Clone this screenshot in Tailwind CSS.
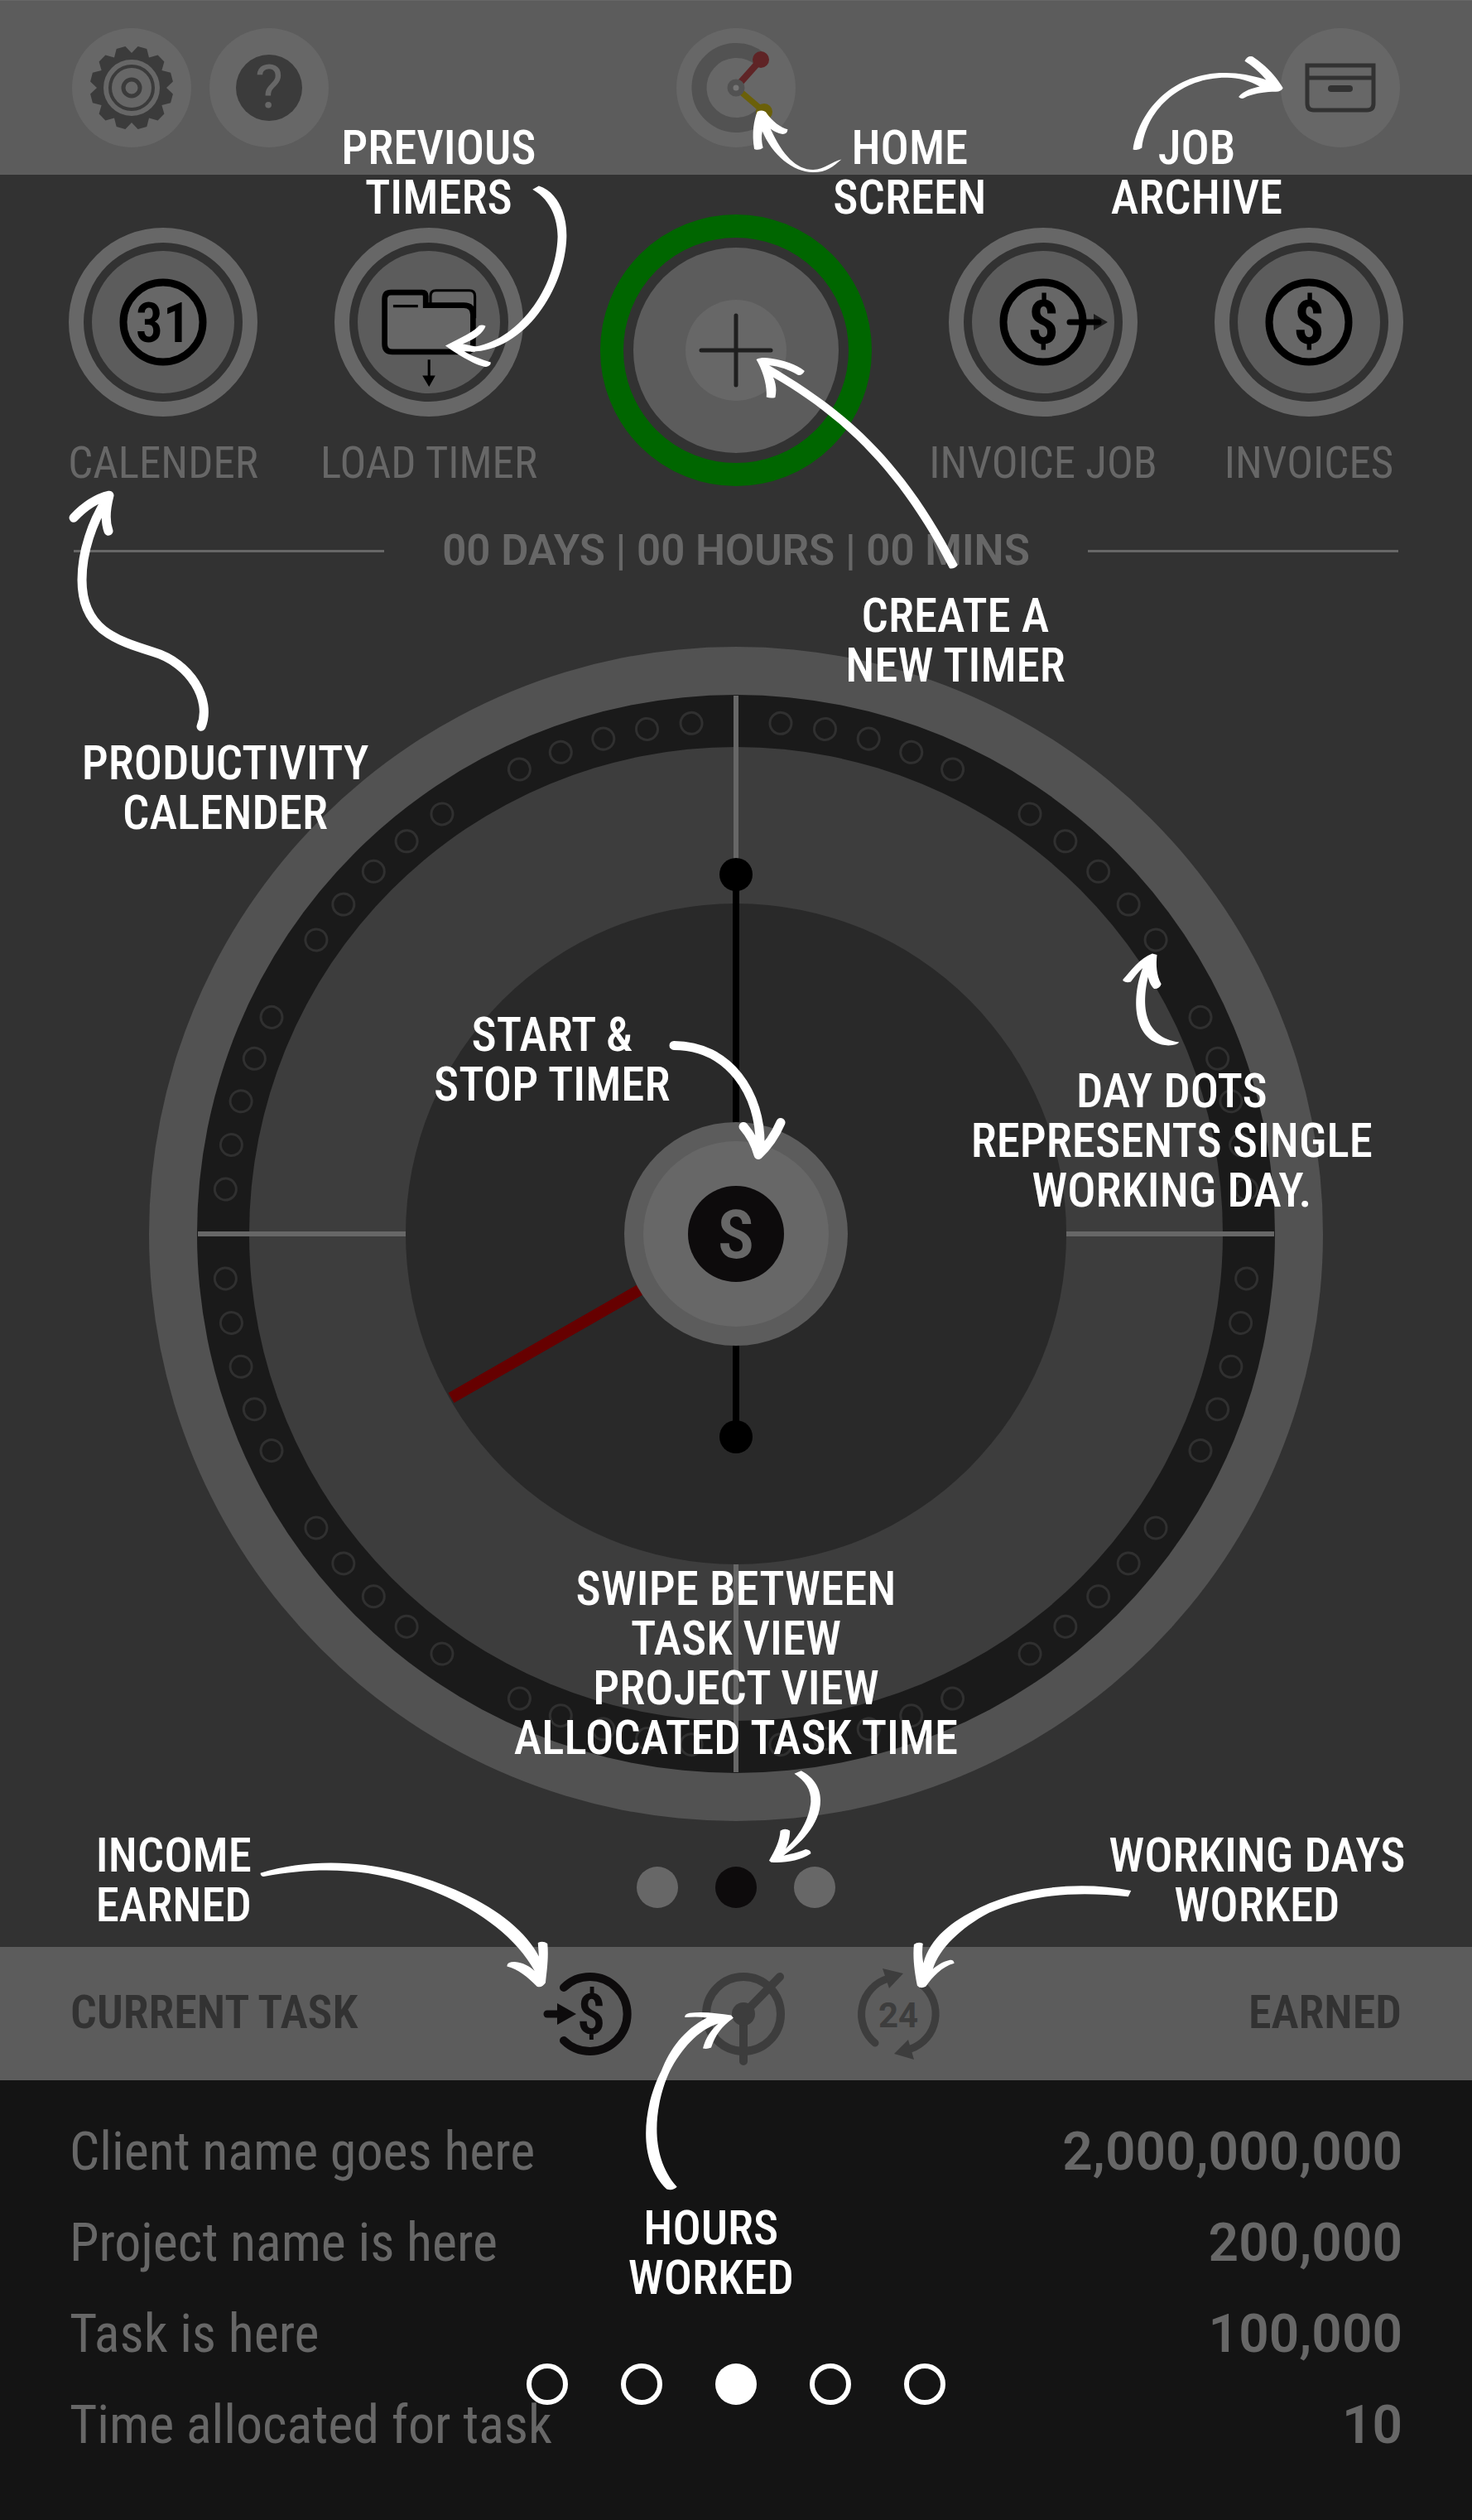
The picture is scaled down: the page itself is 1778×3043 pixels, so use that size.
<!DOCTYPE html>
<html lang="en">
<head>
<meta charset="utf-8">
<meta name="viewport" content="width=device-width, initial-scale=1">
<title>Job timer – guide</title>
<script src="https://cdn.jsdelivr.net/npm/@tailwindcss/browser@4"></script>
</head>
<body class="bg-[#141414] font-['Roboto_Condensed','Roboto',sans-serif]">
<div class="relative overflow-hidden bg-[#323232]">

  <!-- Top bar -->
  <header class="grid h-[211px] grid-cols-3 items-center border-t border-[#676767] bg-[#5c5c5c] px-[87px]">
    <div class="flex gap-[22px]">
      <button aria-label="Settings" class="size-36 rounded-full bg-[#676767]">
        <svg viewBox="-72 -72 144 144" class="size-full" fill="#3b3b3b">
          <defs><path id="teeth" d="M0 0V-42L7.600-49.900L18.300-47.100L21-36.400L31.600-39.400L39.400-31.600L36.400-21L47.100-18.300L49.900-7.600L42 0Z"/></defs>
          <circle r="41"/>
          <use href="#teeth"/><use href="#teeth" transform="rotate(90)"/><use href="#teeth" transform="rotate(180)"/><use href="#teeth" transform="rotate(270)"/>
          <circle r="31" fill="none" stroke="#676767" stroke-width="6"/>
          <circle r="24" fill="#676767"/>
          <circle r="10" fill="#676767" stroke="#3b3b3b" stroke-width="5"/>
        </svg>
      </button>
      <button aria-label="Help" class="flex size-36 items-center justify-center rounded-full bg-[#676767]">
        <span class="flex size-20 items-center justify-center rounded-full bg-[#3b3b3b] font-['Roboto',sans-serif] text-[72px] leading-none text-[#676767]">?</span>
      </button>
    </div>
    <button aria-label="Home" class="size-36 justify-self-center rounded-full bg-[#676767]">
      <svg viewBox="-72 -72 144 144" class="size-full">
        <path d="M30-34A45 45 0 1 0 34 30" fill="none" stroke="#525252" stroke-width="18"/>
        <path d="M5-6L30-34" stroke="#5f2426" stroke-width="8"/><circle cx="30" cy="-34" r="10" fill="#5f2426"/>
        <path d="M6 5L34 29" stroke="#6b6009" stroke-width="7"/><circle cx="34" cy="29" r="10" fill="#6b6009"/>
        <circle r="7" fill="#767676" stroke="#525252" stroke-width="7"/>
      </svg>
    </button>
    <button aria-label="Job archive" class="size-36 justify-self-end rounded-full bg-[#676767]">
      <svg viewBox="-72 -72 144 144" class="size-full" fill="none" stroke="#323232" stroke-width="5">
        <path d="M-40-27H40V19Q40 27 32 27H-32Q-40 27-40 19ZM-40-12H40"/>
        <path d="M-11 1H11" stroke-width="8" stroke-linecap="round"/>
      </svg>
    </button>
  </header>

  <!-- Main actions -->
  <nav class="flex items-start justify-between px-[83px] pt-12 text-[53px] leading-[60px] text-[#676767]">
    <button class="mt-4 flex w-[228px] flex-col items-center gap-[26px]">
      <span class="flex size-[228px] items-center justify-center rounded-full border-[18px] border-[#676767]">
        <svg viewBox="-86 -86 172 172" class="size-[172px] rounded-full bg-[#5c5c5c]">
          <circle r="48" fill="#676767" stroke="#000" stroke-width="9"/>
          <text y="24" text-anchor="middle" font-size="66" font-weight="600" fill="#000">31</text>
        </svg>
      </span>
      <span class="whitespace-nowrap">CALENDER</span>
    </button>
    <button class="mt-4 flex w-[228px] flex-col items-center gap-[26px]">
      <span class="flex size-[228px] items-center justify-center rounded-full border-[18px] border-[#676767]">
        <svg viewBox="968 678 385 385" class="size-[172px] rounded-full bg-[#5c5c5c]" stroke="#000">
          <path d="M1165 830V800Q1165 785 1180 785H1270Q1285 785 1285 800V860" fill="#676767" stroke-width="7"/>
          <path d="M1041 808Q1041 790 1058 790H1142Q1152 790 1152 800V825H1255Q1280 825 1280 850V930Q1280 951 1258 951H1062Q1041 951 1041 930Z" fill="#676767" stroke-width="15"/>
          <path d="M1064 827H1131M1161 972V1020" stroke-width="7"/>
          <path d="M1143 1015H1178L1161 1045Z" stroke="none"/>
        </svg>
      </span>
      <span class="whitespace-nowrap">LOAD TIMER</span>
    </button>
    <button aria-label="New timer" class="flex size-[328px] items-center justify-center rounded-full border-[28px] border-[#006600]">
      <svg viewBox="-124 -124 248 248" class="size-[248px] rounded-full bg-[#5c5c5c]">
        <circle r="61" fill="#676767"/>
        <path d="M-42 0H42M0-42V42" stroke="#1f1f1f" stroke-width="5" stroke-linecap="round"/>
      </svg>
    </button>
    <button class="mt-4 flex w-[228px] flex-col items-center gap-[26px]">
      <span class="flex size-[228px] items-center justify-center rounded-full border-[18px] border-[#676767]">
        <svg viewBox="-86 -86 172 172" class="size-[172px] rounded-full bg-[#5c5c5c]">
          <circle r="48" fill="#676767" stroke="#000" stroke-width="9"/>
          <text y="26" text-anchor="middle" font-size="74" font-weight="700" fill="#000">$</text>
          <path d="M61-10L78 0L61 10Z" fill="#1d1d1d"/>
          <path d="M32 0H67" stroke="#000" stroke-width="7" stroke-linecap="round"/>
        </svg>
      </span>
      <span class="whitespace-nowrap">INVOICE JOB</span>
    </button>
    <button class="mt-4 flex w-[228px] flex-col items-center gap-[26px]">
      <span class="flex size-[228px] items-center justify-center rounded-full border-[18px] border-[#676767]">
        <svg viewBox="-86 -86 172 172" class="size-[172px] rounded-full bg-[#5c5c5c]">
          <circle r="48" fill="#676767" stroke="#000" stroke-width="9"/>
          <text y="26" text-anchor="middle" font-size="74" font-weight="700" fill="#000">$</text>
        </svg>
      </span>
      <span class="whitespace-nowrap">INVOICES</span>
    </button>
  </nav>

  <div class="mt-[46px] flex items-center gap-[70px] px-[89px] text-[#676767]">
    <span class="h-[3px] flex-1 bg-[#676767]"></span>
    <p class="font-['Roboto',sans-serif] text-[51px] leading-[60px] font-semibold">00 DAYS | 00 HOURS | 00 MINS</p>
    <span class="h-[3px] flex-1 bg-[#676767]"></span>
  </div>

  <!-- Dial -->
  <main class="pt-[86px]">
    <svg viewBox="-709 -709 1418 1418" role="img" aria-label="Timer dial" class="mx-auto w-full max-w-[1418px]">
      <defs>
        <g id="days" fill="none" stroke="#303030" stroke-width="3">
          <circle cy="-619" r="13" transform="rotate(5)"/><circle cy="-619" r="13" transform="rotate(10)"/><circle cy="-619" r="13" transform="rotate(15)"/><circle cy="-619" r="13" transform="rotate(20)"/><circle cy="-619" r="13" transform="rotate(25)"/>
        </g>
      </defs>
      <circle r="709" fill="#525252"/>
      <circle r="651" fill="#1a1a1a"/>
      <circle r="588" fill="#3d3d3d"/>
      <use href="#days"/><use href="#days" transform="rotate(30)"/><use href="#days" transform="rotate(60)"/><use href="#days" transform="rotate(90)"/><use href="#days" transform="rotate(120)"/><use href="#days" transform="rotate(150)"/><use href="#days" transform="rotate(180)"/><use href="#days" transform="rotate(210)"/><use href="#days" transform="rotate(240)"/><use href="#days" transform="rotate(270)"/><use href="#days" transform="rotate(300)"/><use href="#days" transform="rotate(330)"/>
      <path d="M0-650V650M-650 0H650" stroke="#676767" stroke-width="6"/>
      <circle r="399" fill="#292929"/>
      <path d="M0-434V245" stroke="#000" stroke-width="8"/>
      <circle cy="-434" r="20"/><circle cy="245" r="20"/>
      <path d="M-110 64L-344 198" stroke="#660000" stroke-width="14"/>
      <circle r="135" fill="#5c5c5c"/>
      <circle r="112" fill="#676767"/>
      <circle r="58" fill="#0d0b0c"/>
      <text y="29" text-anchor="middle" font-size="82" font-weight="600" fill="#676767">S</text>
    </svg>
    <div class="mt-[55px] flex justify-center gap-[45px]">
      <button aria-label="Task view" class="size-[50px] rounded-full bg-[#676767]"></button>
      <button aria-label="Project view" class="size-[50px] rounded-full bg-[#0d0b0c]"></button>
      <button aria-label="Allocated task time" class="size-[50px] rounded-full bg-[#676767]"></button>
    </div>
  </main>

  <!-- Task bar -->
  <section class="mt-[47px] flex h-[161px] items-center bg-[#5c5c5c] px-[85px] text-[56px] leading-[64px] font-semibold text-[#323232]">
    <h2 class="flex-1 pb-1">CURRENT TASK</h2>
    <div class="flex gap-[60px]">
      <button aria-label="Income earned">
        <svg viewBox="628 2361 152 140" class="h-[140px] w-[152px]" fill="#0d0b0c">
          <path d="M681 2399A45 45 0 1 1 681 2463" fill="none" stroke="#0d0b0c" stroke-width="10" stroke-linecap="round"/>
          <path d="M661 2431H680" stroke="#0d0b0c" stroke-width="9" stroke-linecap="round"/><path d="M673 2418L696 2431L673 2444Z"/>
          <text x="714" y="2455" text-anchor="middle" font-size="68">$</text>
        </svg>
      </button>
      <button aria-label="Hours worked">
        <svg viewBox="840 2361 120 140" class="h-[140px] w-[120px]" fill="none" stroke="#3d3d3d" stroke-width="10" stroke-linecap="round">
          <circle cx="898" cy="2431" r="45"/>
          <path d="M942 2386L898 2431V2488"/><circle cx="898" cy="2431" r="14" fill="#3d3d3d" stroke="none"/>
        </svg>
      </button>
      <button aria-label="Working days worked">
        <svg viewBox="1020 2361 130 140" class="h-[140px] w-[130px]" fill="#3d3d3d">
          <path d="M1057 2466A45 45 0 0 1 1073 2388M1114 2396A45 45 0 0 1 1100 2473" fill="none" stroke="#3d3d3d" stroke-width="9" stroke-linecap="round"/>
          <path d="M1066 2376L1091 2382L1074 2400ZM1097 2462L1080 2479L1104 2486Z"/>
          <text x="1085" y="2447" text-anchor="middle" font-family="Roboto, sans-serif" font-size="42" font-weight="700">24</text>
        </svg>
      </button>
    </div>
    <h2 class="flex-1 pb-1 text-right">EARNED</h2>
  </section>

  <section class="bg-[#141414] px-[84px] pt-8 pb-[60px]">
    <table class="w-full text-[64px] leading-[72px] text-[#676767]">
      <tbody>
        <tr class="h-[110px]"><th scope="row" class="text-left font-normal">Client name goes here</th><td class="text-right font-['Roboto',sans-serif] font-semibold">2,000,000,000</td></tr>
        <tr class="h-[110px]"><th scope="row" class="text-left font-normal">Project name is here</th><td class="text-right font-['Roboto',sans-serif] font-semibold">200,000</td></tr>
        <tr class="h-[110px]"><th scope="row" class="text-left font-normal">Task is here</th><td class="text-right font-['Roboto',sans-serif] font-semibold">100,000</td></tr>
        <tr class="h-[110px]"><th scope="row" class="text-left font-normal">Time allocated for task</th><td class="text-right font-['Roboto',sans-serif] font-semibold">10</td></tr>
      </tbody>
    </table>
  </section>

  <!-- Guide overlay -->
  <aside aria-label="Guide" class="pointer-events-none absolute inset-0 text-center text-[57px] leading-[60px] font-medium whitespace-nowrap text-white">
    <svg viewBox="0 0 1778 3043" preserveAspectRatio="none" class="absolute inset-0 size-full" fill="#fff">
      <g transform="scale(.4464)">
        <path d="M1441 512L1458 503C1510 520 1534 580 1533 640C1530 780 1420 950 1275 951L1275 939C1400 925 1505 780 1509 640C1508 590 1490 540 1441 512Z"/>
        <path d="M1205 935C1250 912 1285 895 1297 880Q1306 877 1314 882C1308 900 1285 918 1252 930L1290 938L1285 951L1256 950C1280 965 1305 972 1328 980Q1328 990 1315 992C1290 990 1240 960 1205 935Z"/>
      </g>
      <g transform="translate(680) scale(.4082 .4464)">
        <path d="M575 302Q590 296 600 303C620 330 645 345 665 350Q664 362 650 363C635 360 625 355 614 348C650 420 690 458 740 459C775 458 795 437 824 431C800 450 780 466 740 466C680 465 620 420 590 355C586 370 588 385 592 400Q580 408 566 403C558 360 565 325 575 302Z"/>
        <path d="M572 972C585 966 600 967 615 969C655 975 690 985 715 1003Q708 1016 695 1014C670 1000 640 990 610 988C820 1100 1000 1230 1168 1528Q1158 1540 1144 1537C1000 1280 830 1130 622 1020C632 1040 632 1058 628 1075Q615 1078 602 1074C605 1040 590 1000 572 972Z"/>
      </g>
      <path transform="translate(1100) scale(.4324 .4464)" d="M621 404C640 290 740 195 880 197C920 197 960 205 993 216C975 195 955 178 933 165Q940 150 955 153C990 175 1020 205 1040 238Q1035 248 1020 248C985 248 950 255 935 263Q925 270 916 262C930 245 955 238 975 234C945 217 910 209 880 210C760 210 660 290 646 400Q635 408 621 404Z"/>
      <g fill="none" stroke="#fff" stroke-width="11" stroke-linecap="round" stroke-linejoin="round">
        <path d="M243 877C256 845 230 800 185 787C140 773 99 760 99 700C99 665 112 630 128 604M89 625Q110 603 132 598Q125 625 131 641"/>
        <path d="M814 1262C880 1262 920 1320 918 1385M898 1360Q911 1375 916 1394Q933 1378 943 1355"/>
      </g>
      <path transform="translate(1100 900) scale(.4324 .3827)" d="M593 738C615 710 640 670 675 656L688 660C685 690 686 725 700 752Q695 768 680 767C670 757 666 743 663 730C645 820 650 920 750 936Q745 945 720 946C620 940 615 800 648 702C635 715 625 730 615 745Q603 750 593 742Z"/>
      <path transform="translate(500 1850) scale(.4847 .3333)" d="M948 873L965 863C1000 890 1013 930 1013 970C1013 1060 960 1130 921 1170C945 1163 965 1155 976 1147Q990 1150 989 1163C960 1190 925 1197 890 1194L885 1188C900 1150 912 1115 913 1080Q925 1068 937 1080C937 1105 932 1130 926 1145C960 1100 985 1040 989 975C990 930 975 900 948 873Z"/>
      <path transform="translate(0 2180) scale(.574 .5504)" d="M548 147C640 118 740 118 840 143C980 178 1095 250 1134 330L1132 300Q1143 295 1152 302C1155 335 1150 365 1148 388Q1140 400 1130 396C1110 375 1090 358 1067 352Q1066 342 1083 342C1100 343 1115 352 1125 362C1080 276 980 207 860 168C760 136 660 134 555 155Q548 154 548 147Z"/>
      <path transform="translate(880 2180) scale(.5727 .5504)" d="M849 186C740 163 620 178 530 223C470 253 425 290 411 345C408 330 408 315 410 302Q400 297 391 304C388 335 393 368 398 394Q405 402 416 396C430 375 450 352 476 345Q475 337 467 338C450 342 440 350 431 358C445 312 490 267 550 234C640 192 740 187 843 199Z"/>
      <path transform="translate(630 2340) scale(.3444 .3333)" d="M509 908C400 800 430 600 490 480C520 400 570 330 650 287C625 283 600 283 573 286Q570 275 590 270C640 264 690 272 735 278L743 288C700 320 680 350 665 395Q650 402 636 398C645 360 665 330 690 308C620 330 560 400 520 480C470 590 440 780 545 900Q530 915 509 908Z"/>
    </svg>
    <p class="absolute top-[149px] left-[29.8%] -translate-x-1/2">PREVIOUS<br>TIMERS</p>
    <p class="absolute top-[149px] left-[61.8%] -translate-x-1/2">HOME<br>SCREEN</p>
    <p class="absolute top-[149px] left-[81.3%] -translate-x-1/2">JOB<br>ARCHIVE</p>
    <p class="absolute top-[714px] left-[64.9%] -translate-x-1/2">CREATE A<br>NEW TIMER</p>
    <p class="absolute top-[892px] left-[15.3%] -translate-x-1/2">PRODUCTIVITY<br>CALENDER</p>
    <p class="absolute top-[1220px] left-[37.5%] -translate-x-1/2">START &amp;<br>STOP TIMER</p>
    <p class="absolute top-[1288px] left-[79.6%] -translate-x-1/2">DAY DOTS<br>REPRESENTS SINGLE<br>WORKING DAY.</p>
    <p class="absolute top-[1889px] left-1/2 -translate-x-1/2">SWIPE BETWEEN<br>TASK VIEW<br>PROJECT VIEW<br>ALLOCATED TASK TIME</p>
    <p class="absolute top-[2211px] left-[11.8%] -translate-x-1/2">INCOME<br>EARNED</p>
    <p class="absolute top-[2211px] left-[85.4%] -translate-x-1/2">WORKING DAYS<br>WORKED</p>
    <p class="absolute top-[2661px] left-[48.3%] -translate-x-1/2">HOURS<br>WORKED</p>
    <div class="pointer-events-auto absolute inset-x-0 bottom-[140px] flex justify-center gap-16">
      <button aria-label="Guide page 1" class="size-[50px] rounded-full border-[6px] border-white"></button>
      <button aria-label="Guide page 2" class="size-[50px] rounded-full border-[6px] border-white"></button>
      <button aria-label="Guide page 3" aria-current="true" class="size-[50px] rounded-full bg-white"></button>
      <button aria-label="Guide page 4" class="size-[50px] rounded-full border-[6px] border-white"></button>
      <button aria-label="Guide page 5" class="size-[50px] rounded-full border-[6px] border-white"></button>
    </div>
  </aside>
</div>
</body>
</html>
